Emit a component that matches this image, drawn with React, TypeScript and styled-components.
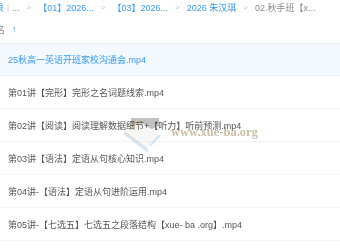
import React from "react";
import styled, { createGlobalStyle } from "styled-components";

const Global = createGlobalStyle`
  html, body { margin: 0; padding: 0; background: #fff; }
  body { width: 340px; height: 252px; overflow: hidden; font-family: "Liberation Sans", "Noto Sans CJK SC", sans-serif; }
`;

const Page = styled.div`
  position: relative;
  width: 340px;
  height: 252px;
  overflow: hidden;
  background: #fff;
`;

const Crumbs = styled.div`
  display: flex;
  align-items: center;
  height: 15px;
  white-space: nowrap;
  font-size: 9px;
  color: #999;
`;

const Crumb = styled.span<{ $active?: boolean; $cut?: number }>`
  color: ${(p) => (p.$active ? "#3a9be6" : "#8a8a8a")};
  margin-left: ${(p) => (p.$cut ? `-${p.$cut}px` : "0")};
`;

const Sep = styled.span<{ $w?: number }>`
  color: #c4c4c4;
  font-size: 8px;
  padding: 0 ${(p) => p.$w ?? 7}px;
`;

const SortBar = styled.div`
  display: flex;
  align-items: center;
  gap: 7px;
  height: 28px;
  font-size: 9px;
  color: #666;
  white-space: nowrap;
`;

const Arrow = styled.span`
  color: #3a9be6;
  font-size: 9px;
  font-weight: bold;
`;

const List = styled.div`
  display: flex;
  flex-direction: column;
`;

const Row = styled.div<{ $selected?: boolean }>`
  display: flex;
  align-items: center;
  height: 33px;
  box-sizing: border-box;
  padding-left: 8px;
  font-size: 9px;
  white-space: nowrap;
  color: ${(p) => (p.$selected ? "#3a9be6" : "#555")};
  background: ${(p) => (p.$selected ? "#f3f9fe" : "#fff")};
  border-top: 1px solid ${(p) => (p.$selected ? "#e8f0f7" : "transparent")};
  border-bottom: 1px solid ${(p) => (p.$selected ? "#e8f0f7" : "#f4f4f4")};
`;

const IconMark = styled.div`
  position: absolute;
  left: 121px;
  top: 116px;
  width: 42px;
  height: 38px;
  mix-blend-mode: multiply;
  pointer-events: none;
`;

const WaterText = styled.span`
  position: absolute;
  left: 171px;
  top: 125px;
  font-family: "Liberation Serif", "DejaVu Serif", serif;
  font-weight: bold;
  font-size: 12.5px;
  color: rgba(190, 172, 140, 0.8);
  mix-blend-mode: multiply;
  pointer-events: none;
  white-space: nowrap;
`;

const BookIcon = () => (
  <svg width="42" height="38" viewBox="0 0 42 38">
    <defs>
      <linearGradient id="g1" x1="0" y1="0" x2="1" y2="1">
        <stop offset="0" stopColor="#f3d36a" />
        <stop offset="0.55" stopColor="#eef1f4" />
        <stop offset="1" stopColor="#9cc8ef" />
      </linearGradient>
    </defs>
    <path d="M10 2 L38 2 L38 10 L24 16 L10 8 Z" fill="#b0b0b0" opacity="0.8" />
    <path d="M6 14 L30 30 L40 20 L16 4 Z" fill="url(#g1)" opacity="0.75" />
    <path d="M3 16 L27 34 L27 37 L3 19 Z" fill="#cfe2f2" opacity="0.8" />
    <path d="M4 15 L20 6 L38 18 L26 32 Z" fill="#f7f7f7" opacity="0.9" />
    <path d="M4 15 L26 32 L27 34 L3 17 Z" fill="#d6d6d6" opacity="0.8" />
  </svg>
);

const files = [
  "第01讲【完形】完形之名词题线索.mp4",
  "第02讲【阅读】阅读理解数据细节+【听力】听前预测.mp4",
  "第03讲【语法】定语从句核心知识.mp4",
  "第04讲-【语法】定语从句进阶运用.mp4",
  "第05讲-【七选五】七选五之段落结构【xue- ba .org】.mp4",
];

export default function App() {
  return (
    <Page>
      <Global />
      <Crumbs>
        <Crumb $active $cut={5}>录</Crumb>
        <Sep $w={3}>|</Sep>
        <Crumb>...</Crumb>
        <Sep>&gt;</Sep>
        <Crumb $active>【01】2026...</Crumb>
        <Sep>&gt;</Sep>
        <Crumb $active>【03】2026...</Crumb>
        <Sep>&gt;</Sep>
        <Crumb $active>2026 朱汉琪</Crumb>
        <Sep>&gt;</Sep>
        <Crumb>02.秋手班【x...</Crumb>
      </Crumbs>
      <SortBar>
        <Crumb $cut={4}>名</Crumb>
        <Arrow>↑</Arrow>
      </SortBar>
      <List>
        <Row $selected>25秋高一英语开班家校沟通会.mp4</Row>
        {files.map((f) => (
          <Row key={f}>{f}</Row>
        ))}
      </List>
      <IconMark>
        <BookIcon />
      </IconMark>
      <WaterText>www.xue-ba.org</WaterText>
    </Page>
  );
}
